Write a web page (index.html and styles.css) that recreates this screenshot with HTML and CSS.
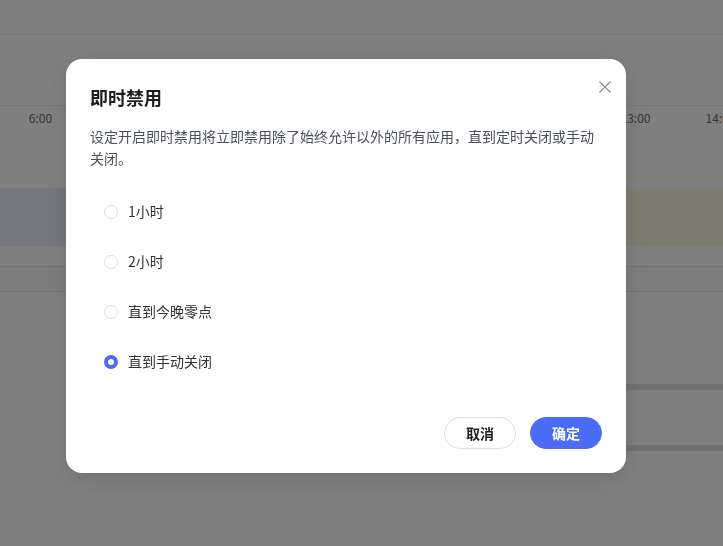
FILE: index.html
```html
<!DOCTYPE html>
<html lang="zh-CN">

<head>
    <meta charset="UTF-8">
    <meta name="viewport" content="width=device-width, initial-scale=1.0">
    <title>即时禁用</title>
    <link rel="stylesheet" href="styles.css">
</head>

<body>
    <div class="page">
        <div class="page__top"></div>
        <div class="page__axis">
            <div class="hours">
                <span>6:00</span><span>7:00</span><span>8:00</span><span>9:00</span><span>10:00</span>
                <span>11:00</span><span>12:00</span><span>13:00</span><span>14:00</span>
            </div>
        </div>
        <div class="page__band">
            <div class="band band--blue"></div>
            <div class="band band--yellow"></div>
        </div>
        <div class="page__row"></div>
        <div class="page__row page__row--dark"></div>
        <div class="page__bars">
            <div class="bar"></div>
            <div class="bar bar--second"></div>
        </div>
    </div>

    <div class="mask">
        <div class="dialog">
            <button class="dialog__close" aria-label="关闭">
                <svg width="16" height="16" viewBox="0 0 16 16">
                    <path d="M2.5 2.5 L13.5 13.5 M13.5 2.5 L2.5 13.5" stroke="#8a8d96" stroke-width="1.1" fill="none" />
                </svg>
            </button>
            <h2 class="dialog__title">即时禁用</h2>
            <p class="dialog__desc">设定开启即时禁用将立即禁用除了始终允许以外的所有应用，直到定时关闭或手动关闭。</p>
            <div class="options">
                <label class="option"><span class="radio"></span>1小时</label>
                <label class="option"><span class="radio"></span>2小时</label>
                <label class="option"><span class="radio"></span>直到今晚零点</label>
                <label class="option"><span class="radio radio--checked"></span>直到手动关闭</label>
            </div>
            <div class="dialog__footer">
                <button class="btn">取消</button>
                <button class="btn btn--primary">确定</button>
            </div>
        </div>
    </div>
</body>

</html>
```

FILE: styles.css
```css
* {
    box-sizing: border-box;
    padding: 0;
    margin: 0;
}

body {
    width: 723px;
    height: 546px;
    overflow: hidden;
    background: #ffffff;
    font-family: "Noto Sans CJK SC", "Noto Sans", sans-serif;
}

/* page behind the mask */
.page__top {
    height: 106px;
    border-top: 34px solid #ffffff;
    box-shadow: inset 0 1px 0 #ececec;
    border-bottom: 1px solid #ececec;
}

.page__axis {
    height: 81px;
}

.hours {
    display: flex;
    margin-left: -2px;
    padding-top: 2px;
    overflow: hidden;
}

.hours span {
    flex: 0 0 85px;
    text-align: center;
    font-size: 12px;
    line-height: 20px;
    color: #707070;
}

.page__band {
    display: flex;
    height: 58px;
    margin-top: 1px;
}

.band {
    flex: 1;
}

.band--blue {
    background: #eff1fb;
}

.band--yellow {
    background: #fcf6df;
}

.page__row {
    height: 21px;
    border-bottom: 1px solid #e4e4e6;
}

.page__row--dark {
    height: 25px;
    background: #fafafa;
    border-bottom: 1px solid #e4e4e6;
}

.page__bars {
    padding-left: 400px;
    padding-top: 92px;
}

.bar {
    height: 6px;
    background: #e2e2e8;
}

.bar--second {
    margin-top: 55px;
}

/* mask + dialog */
.mask {
    position: fixed;
    inset: 0;
    background: rgba(0, 0, 0, 0.5);
    padding: 59px 0 0 66px;
}

.dialog {
    position: relative;
    width: 560px;
    height: 414px;
    background: #ffffff;
    border-radius: 16px;
    padding: 23px 24px 24px;
    box-shadow: 0 6px 24px rgba(0, 0, 0, 0.12);
}

.dialog__close {
    position: absolute;
    top: 20px;
    right: 13px;
    width: 16px;
    height: 16px;
    border: none;
    background: none;
    display: flex;
    cursor: pointer;
}

.dialog__title {
    font-size: 18px;
    line-height: 30px;
    font-weight: bold;
    color: #1d1d1f;
}

.dialog__desc {
    margin-top: 13px;
    font-size: 14px;
    line-height: 22px;
    color: #4a4f5a;
}

.options {
    margin-top: 17px;
}

.option {
    display: flex;
    align-items: center;
    height: 50px;
    padding-left: 14px;
    font-size: 14px;
    line-height: 20px;
    color: #333333;
}

.radio {
    width: 14px;
    height: 14px;
    border: 1px solid #dcdee4;
    border-radius: 50%;
    margin-right: 10px;
    margin-top: 2px;
}

.radio--checked {
    border: 4.5px solid #4a6cf7;
    background: #ffffff;
}

.dialog__footer {
    display: flex;
    justify-content: flex-end;
    gap: 14px;
    margin-top: 31px;
}

.btn {
    width: 72px;
    height: 32px;
    border-radius: 16px;
    border: 1px solid #dcdee4;
    background: #ffffff;
    color: #222222;
    font-family: inherit;
    font-size: 14px;
    font-weight: bold;
    cursor: pointer;
}

.btn--primary {
    border-color: #4a6cf7;
    background: #4a6cf7;
    color: #ffffff;
}
```
